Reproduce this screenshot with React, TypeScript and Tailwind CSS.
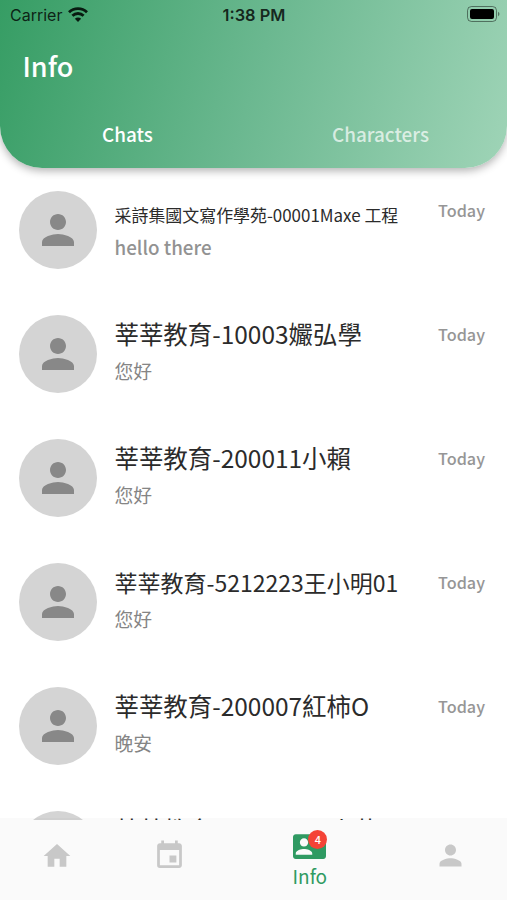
import { MdContactMail, MdHome, MdInsertInvitation, MdPerson } from "react-icons/md";

const chats = [
  { name: "采詩集國文寫作學苑-00001Maxe 工程", message: "hello there", date: "Today", nameClass: "text-[16.95px] pt-[5px]", messageClass: "font-medium text-[#929292]" },
  { name: "莘莘教育-10003孍弘學", message: "您好", date: "Today", nameClass: "text-[24.45px]", messageClass: "text-[#858585]" },
  { name: "莘莘教育-200011小賴", message: "您好", date: "Today", nameClass: "text-[24.45px]", messageClass: "text-[#858585]" },
  { name: "莘莘教育-5212223王小明01", message: "您好", date: "Today", nameClass: "text-[23px]", messageClass: "text-[#858585]" },
  { name: "莘莘教育-200007紅柿O", message: "晚安", date: "Today", nameClass: "text-[24.45px]", messageClass: "text-[#858585]" },
  { name: "莘莘教育-20000612小花", message: "您好", date: "Today", nameClass: "text-[24.45px]", messageClass: "text-[#858585]" },
];

function StatusBar() {
  return (
    <div className="grid grid-cols-3 items-center h-[30px] pl-[10px] pr-[7px] font-[Inter,sans-serif] text-[16px] leading-[30px] text-black/80">
      <div className="flex items-center gap-[6px]">
        <span>Carrier</span>
        <svg className="-mt-px" width="20" height="15" viewBox="0 0 20 15" fill="none" stroke="#081a10" strokeWidth="2.8">
          <path d="M1 5.2a13 13 0 0 1 18 0" />
          <path d="M4.4 8.8a8 8 0 0 1 11.2 0" />
          <path d="M10 15l-3.1-3.2a4.4 4.4 0 0 1 6.2 0z" fill="#081a10" stroke="none" />
        </svg>
      </div>
      <span className="-ml-[2px] text-center text-[16.4px] font-semibold">1:38 PM</span>
      <svg className="justify-self-end -mt-[2px]" width="33" height="16" viewBox="0 0 33 16">
        <rect x="0.5" y="0.5" width="29" height="15" rx="4" fill="none" stroke="#000" strokeOpacity="0.45" />
        <rect x="3" y="3" width="24" height="10" rx="2" fill="#000" />
        <path d="M31 5.8c2 .8 2 3.6 0 4.4z" fill="#000" fillOpacity="0.45" />
      </svg>
    </div>
  );
}

function Header() {
  return (
    <header className="relative z-10 h-[168px] shrink-0 rounded-b-[42px] bg-linear-[107deg,#369d64,#6bb890_50%,#9fd4b7] shadow-[0_3px_9px_rgba(0,0,0,0.3)]">
      <StatusBar />
      <h1 className="pl-[22.5px] pt-[16px] text-[27px] leading-[40px] font-medium text-white">Info</h1>
      <div className="grid grid-cols-2 mt-[33px] pl-px text-center text-[18.9px] leading-[30px] font-medium">
        <button className="text-white">Chats</button>
        <button className="text-white/70">Characters</button>
      </div>
    </header>
  );
}

function BottomNav() {
  return (
    <nav className="relative grid grid-cols-[1fr_1fr_1.5fr_1fr] h-[80px] shrink-0 bg-[#fafafa] shadow-[0_-2px_0_rgba(0,0,0,0.02)] text-[#c8c8c8]">
      <div className="flex justify-center pt-5 pl-[2px]">
        <MdHome className="size-8" />
      </div>
      <div className="flex justify-center pt-[19px] pl-px">
        <MdInsertInvitation className="size-[33px]" />
      </div>
      <div className="flex flex-col items-center pt-[10px] text-[#2f9a62]">
        <div className="relative">
          <MdContactMail className="size-[33px]" />
          <span className="absolute left-[15px] top-0 flex items-center justify-center size-[19px] rounded-full bg-[#f44336] text-[11px] font-medium text-white">
            4
          </span>
        </div>
        <span className="text-[19px] leading-[26px]">Info</span>
      </div>
      <div className="flex justify-center pt-[19px]">
        <MdPerson className="size-[33px]" />
      </div>
    </nav>
  );
}

export default function App() {
  return (
    <div className="flex flex-col h-[900px] w-[507px] overflow-hidden bg-white font-['Noto_Sans_CJK_TC','Noto_Sans_CJK_JP',sans-serif]">
      <Header />
      <main className="flex-1 min-h-0 overflow-hidden">
        {chats.map((chat) => (
          <div key={chat.name} className="flex h-[124px] pl-[18.5px] pr-[22px]">
            <div className="flex items-center justify-center size-[78px] mt-[23px] shrink-0 rounded-full bg-[#d4d4d4]">
              <MdPerson className="size-12 text-[#888]" />
            </div>
            <div className="flex-1 ml-[18px] pt-[24px] whitespace-nowrap">
              <div className={`h-[36px] leading-[36px] text-[#2b2b2b] ${chat.nameClass}`}>{chat.name}</div>
              <div className={`h-[38px] leading-[38px] text-[18.8px] ${chat.messageClass}`}>{chat.message}</div>
            </div>
            <div className="pt-[30px] text-[16.2px] leading-[24px] font-medium text-[#969696]">{chat.date}</div>
          </div>
        ))}
      </main>
      <BottomNav />
    </div>
  );
}
